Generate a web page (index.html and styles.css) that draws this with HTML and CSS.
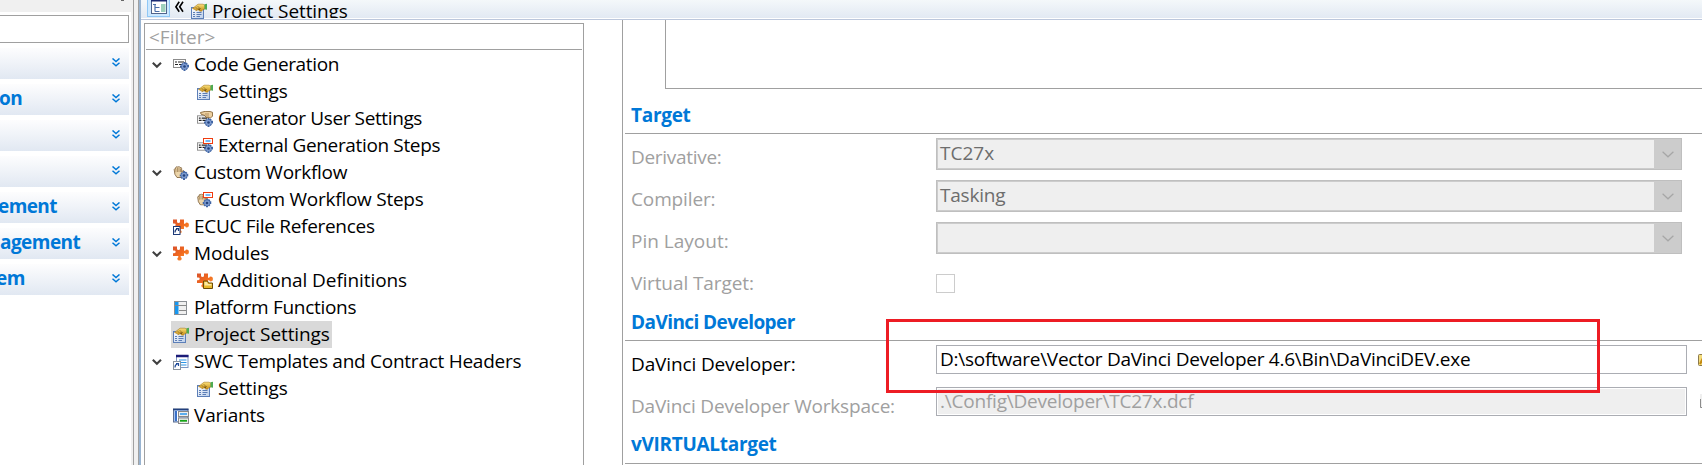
FILE: index.html
```
<!DOCTYPE html>
<html lang="en">
<head>
<meta charset="utf-8">
<title>Project Settings</title>
<link rel="stylesheet" href="styles.css">
</head>
<body>
<svg class="defs" width="0" height="0">
  <defs>
    <linearGradient id="gold" x1="0" y1="0" x2="0" y2="1"><stop offset="0" stop-color="#fbe07a"/><stop offset="1" stop-color="#c48a10"/></linearGradient>
    <linearGradient id="orange" x1="0" y1="0" x2="1" y2="1"><stop offset="0" stop-color="#d9532c"/><stop offset=".5" stop-color="#f26a1e"/><stop offset="1" stop-color="#f9a040"/></linearGradient>
    <linearGradient id="paper" x1="0" y1="0" x2="1" y2="1"><stop offset="0" stop-color="#fff"/><stop offset="1" stop-color="#b9cdea"/></linearGradient>
    <symbol id="gear" viewBox="0 0 9 9">
      <path d="M3.6 0h1.8v1.2l1-.7 1.4 1.3-.7 1H9v2.7H7.200l.7 1-1.300 1.400-1.100-.7V9H3.500V7.300l-1.100.700L1.100 6.700l.7-1.100H0V3.500h1.700l-.7-1.100L2.400 1l1.200.700z" fill="#3f64a4"/>
      <circle cx="4.500" cy="4.500" r="2.700" fill="#7c9bd0"/><circle cx="4.500" cy="4.500" r="1.300" fill="#23427c"/>
    </symbol>
    <symbol id="card" viewBox="0 0 13 9">
      <rect x=".5" y=".5" width="12" height="8" fill="#fff" stroke="#8b8b8b"/>
      <path d="M2 3h2M5 3h6M2 5.500h3M6 5.500h4" stroke="#222" stroke-width="1.200"/>
    </symbol>
    <symbol id="palm" viewBox="0 0 12 12">
      <path d="M1.200 3.600q.2-1.200 1.400-.8L2.800 1.300q.8-.9 1.500-.2Q5 .1 5.900 1q1-.5 1.500.5 1.200-.2 1.200 1l.2 3.500 1-1.300q1.200-.4 1.200.6L9.300 9 8 11.500H4L1.900 8.300z" fill="#ecd5aa" stroke="#7a5a33" stroke-width=".8"/>
      <path d="M2.900 3v3.200M4.500 2v4M6 2v4M7.500 2.500v3.500" stroke="#8b693c" stroke-width=".6"/>
    </symbol>
    <symbol id="note" viewBox="0 0 10 6"><rect x=".5" y=".5" width="9" height="5" fill="#fff" stroke="#f03c10"/><path d="M2.500 3h5" stroke="#1b8cf0" stroke-width="1.200"/></symbol>
    <symbol id="piece" viewBox="0 0 16 15">
      <path d="M0 .5h4v2.300q0 1.200 1.500 1.200T7 2.800V.5h4v4.300h1.200q.3-1.300 1.800-1.300 2 .3 2 2.500t-2 2.500q-1.500 0-1.800-1.300H11V10H7.700v1.200q1.100.5 1 1.700-.3 1.600-2.200 1.600t-2.200-1.600q0-1.200 1-1.700V10H0V7.200h1.200q1.500 0 1.500-1.400T1.200 4.400H0z" fill="url(#orange)"/>
    </symbol>
    <symbol id="i-props" viewBox="0 0 16 16">
      <rect x=".5" y="4.500" width="12" height="11" fill="url(#paper)" stroke="#5c7fb8"/>
      <path d="M2 9.500h2M5.500 9.500h5M2 11.500h2M5.500 11.500h5M2 13.500h2M5.500 13.500h3.500" stroke="#5b7db5"/>
      <path d="M1.500 5.500L7 1.200h5l2 1V6l-2 .5-1.500 1.800-2-.4-1.300-1.200-2.200 1-1-1.200z" fill="url(#gold)" stroke="#a87a1c" stroke-width=".6"/>
      <path d="M5 4.500l1 1M7 3.500l1 1M7 6l2 .5M8.500 5l1 1" stroke="#5e430d" stroke-width=".9"/>
      <path d="M13.500 1.200L16 .8v6l-2.500-.6z" fill="#4dab54"/>
    </symbol>
    <symbol id="i-code" viewBox="0 0 16 16"><use href="#card" y="2" width="13" height="9"/><use href="#gear" x="7" y="5" width="9" height="9"/></symbol>
    <symbol id="i-gen" viewBox="0 0 16 16">
      <use href="#card" y="4" width="12" height="9"/><use href="#gear" x="7" y="7" width="9" height="9"/>
      <path d="M3.500 1.500Q8-.2 13 .5l2.500.8v4l-2 1.500L9 6.500 8 4.500 4 3.200z" fill="#edd0a0" stroke="#7c5a2c" stroke-width=".8"/>
      <path d="M8 3h4M9 5h3" stroke="#9a7440" stroke-width=".7"/>
    </symbol>
    <symbol id="i-ext" viewBox="0 0 16 16"><use href="#card" y="4" width="12" height="9"/><use href="#gear" x="7" y="6" width="9" height="9"/><use href="#note" x="6" y="0" width="10" height="6"/></symbol>
    <symbol id="i-flow" viewBox="0 0 16 16"><use href="#palm" x="0" y="1" width="12" height="12"/><use href="#gear" x="6.500" y="6" width="9" height="9"/></symbol>
    <symbol id="i-steps" viewBox="0 0 16 16"><use href="#palm" x="-.5" y="1.500" width="12" height="12"/><use href="#gear" x="5.500" y="6.500" width="9" height="9"/><use href="#note" x="6" y="0" width="10" height="6"/></symbol>
    <symbol id="i-ecuc" viewBox="0 0 16 16"><use href="#piece" width="16" height="15"/><rect x=".5" y="7.500" width="6.500" height="8" fill="#fff" stroke="#1d3a78"/><path d="M2 13.500q0-3 2.300-3.300M3 9.500h2.500V12" fill="none" stroke="#1d3a78" stroke-width="1.200"/></symbol>
    <symbol id="i-mod" viewBox="0 0 16 16"><use href="#piece" width="16" height="15"/></symbol>
    <symbol id="i-add" viewBox="0 0 16 16"><use href="#piece" width="16" height="15"/><path d="M6.500 8h4l1 2h4v5.500h-9z" fill="#e8b92c" stroke="#6c4d08"/><path d="M7.500 9h2.500l1 2h3.500v1.500h-7z" fill="#fbeaa4"/></symbol>
    <symbol id="i-plat" viewBox="0 0 16 16"><rect x="1.500" y="1.500" width="12" height="13" fill="#f0f0f0" stroke="#8b8f94"/><rect x="2" y="2" width="3.500" height="12" fill="#1797f0"/><path d="M2 5.500h11.500M6 10.500h7" stroke="#888"/></symbol>
    <symbol id="i-swc" viewBox="0 0 16 16"><rect x="3.500" y="1.500" width="11.500" height="12" fill="#fff" stroke="#7c97c2"/><path d="M3 2h12.500" stroke="#1b1b78" stroke-width="2.500"/><path d="M6 6h7.500M6 8.500h7.500M8 11h5.500" stroke="#2b94e6" stroke-width="1.200"/><rect x=".5" y="7.500" width="7" height="8" fill="#fff" stroke="#8a949f"/><path d="M2 13.500q0-3 2.300-3.300M3 9.700h2.500V12" fill="none" stroke="#204c9c" stroke-width="1.200"/></symbol>
    <symbol id="i-var" viewBox="0 0 16 16"><rect x=".5" y="1" width="14.500" height="13" fill="#a8c4ee" stroke="#5d6f92"/><path d="M0 1.500h15.500" stroke="#23407e" stroke-width="1.500"/><path d="M3 3v10" stroke="#3a70c8" stroke-width="2"/><path d="M4.500 3v10" stroke="#fff"/><rect x="5.500" y="3.500" width="10" height="5" fill="#eee" stroke="#888"/><path d="M7 6h7" stroke="#4aa5ee" stroke-width="1.800"/><rect x="5.500" y="10" width="10" height="5.500" fill="#eee" stroke="#888"/><path d="M7 12.800h7" stroke="#16a516" stroke-width="1.800"/></symbol>
    <symbol id="i-open" viewBox="0 0 10 8"><path d="M.8 1.700L4.900 5.700 9 1.700" fill="none" stroke="#404040" stroke-width="2.100"/></symbol>
    <symbol id="i-expand" viewBox="0 0 8 9"><path d="M.5 .5L4 3.500 7.500.5M.5 4.700L4 7.700 7.500 4.700" fill="none" stroke="#0078d7" stroke-width="1.500"/></symbol>
    <symbol id="i-drop" viewBox="0 0 12 7"><path d="M.6.700L6 5.800 11.400.7" fill="none" stroke="#a6a6a6" stroke-width="1.200"/></symbol>
  </defs>
</svg>

<div class="app">
  <aside class="side">
    <div class="side-top"><i class="tick"></i></div>
    <div class="side-input"></div>
    <nav class="groups">
      <div class="group"><span></span><svg><use href="#i-expand"/></svg></div>
      <div class="group"><span class="g-on">on</span><svg><use href="#i-expand"/></svg></div>
      <div class="group"><span></span><svg><use href="#i-expand"/></svg></div>
      <div class="group"><span></span><svg><use href="#i-expand"/></svg></div>
      <div class="group"><span class="g-ement">ement</span><svg><use href="#i-expand"/></svg></div>
      <div class="group"><span class="g-age">agement</span><svg><use href="#i-expand"/></svg></div>
      <div class="group"><span class="g-em">em</span><svg><use href="#i-expand"/></svg></div>
    </nav>
  </aside>
  <div class="sash"></div>

  <main class="editor">
    <header class="head">
      <span class="toggle"><svg width="16" height="14" viewBox="0 0 16 14"><rect x=".5" y="-3.500" width="15" height="17" fill="#fff" stroke="#50648c"/><path d="M0 0h16" stroke="#1b2a72" stroke-width="3"/><rect x="10" y="4" width="4.500" height="8" fill="#9ed0bc"/><path d="M2 4.500h3M4 5v6.500M4 7.500h4.500M4 11.500h4.500" stroke="#4a6fa8" stroke-width="1.200" fill="none"/></svg></span>
      <svg class="back" width="9" height="12" viewBox="0 0 9 12"><path d="M4.200.8L.9 5.800l3.300 5M8 .8L4.700 5.800 8 10.800" fill="none" stroke="#000" stroke-width="1.600"/></svg>
      <svg class="icon head-icon"><use href="#i-props"/></svg>
      <span class="head-title">Project Settings</span>
    </header>

    <div class="body">
      <section class="tree">
        <div class="filter">&lt;Filter&gt;</div>
        <div class="row"><svg class="arrow"><use href="#i-open"/></svg><div class="item"><svg class="icon"><use href="#i-code"/></svg><span class="t1">Code Generation</span></div></div>
        <div class="row sub"><div class="item"><svg class="icon"><use href="#i-props"/></svg><span class="t2">Settings</span></div></div>
        <div class="row sub"><div class="item"><svg class="icon"><use href="#i-gen"/></svg><span class="t3">Generator User Settings</span></div></div>
        <div class="row sub"><div class="item"><svg class="icon"><use href="#i-ext"/></svg><span class="t4">External Generation Steps</span></div></div>
        <div class="row"><svg class="arrow"><use href="#i-open"/></svg><div class="item"><svg class="icon"><use href="#i-flow"/></svg><span class="t5">Custom Workflow</span></div></div>
        <div class="row sub"><div class="item"><svg class="icon"><use href="#i-steps"/></svg><span class="t6">Custom Workflow Steps</span></div></div>
        <div class="row leaf"><div class="item"><svg class="icon"><use href="#i-ecuc"/></svg><span class="t7">ECUC File References</span></div></div>
        <div class="row"><svg class="arrow"><use href="#i-open"/></svg><div class="item"><svg class="icon"><use href="#i-mod"/></svg><span class="t8">Modules</span></div></div>
        <div class="row sub"><div class="item"><svg class="icon"><use href="#i-add"/></svg><span class="t9">Additional Definitions</span></div></div>
        <div class="row leaf"><div class="item"><svg class="icon"><use href="#i-plat"/></svg><span class="t10">Platform Functions</span></div></div>
        <div class="row leaf"><div class="item selected"><svg class="icon"><use href="#i-props"/></svg><span class="t11">Project Settings</span></div></div>
        <div class="row"><svg class="arrow"><use href="#i-open"/></svg><div class="item"><svg class="icon"><use href="#i-swc"/></svg><span class="t12">SWC Templates and Contract Headers</span></div></div>
        <div class="row sub"><div class="item"><svg class="icon"><use href="#i-props"/></svg><span class="t2">Settings</span></div></div>
        <div class="row leaf"><div class="item"><svg class="icon"><use href="#i-var"/></svg><span class="t13">Variants</span></div></div>
      </section>

      <section class="form">
        <div class="textarea"></div>
        <h2 class="h-target"><span>Target</span></h2>
        <div class="field off"><label class="l1">Derivative:</label><div class="combo"><span class="v1">TC27x</span><i><svg><use href="#i-drop"/></svg></i></div></div>
        <div class="field off"><label class="l2">Compiler:</label><div class="combo"><span class="v2">Tasking</span><i><svg><use href="#i-drop"/></svg></i></div></div>
        <div class="field off"><label class="l3">Pin Layout:</label><div class="combo"><span></span><i><svg><use href="#i-drop"/></svg></i></div></div>
        <div class="field off"><label class="l4">Virtual Target:</label><div class="check"></div></div>
        <h2 class="h-dev"><span>DaVinci Developer</span></h2>
        <div class="field"><label class="l5">DaVinci Developer:</label><div class="input"><span class="v3">D:\software\Vector DaVinci Developer 4.6\Bin\DaVinciDEV.exe</span></div><svg class="browse" width="16" height="14" viewBox="0 0 16 14"><rect x=".5" y="1.500" width="18" height="11" rx="1" fill="#f3dc7c" stroke="#8c7a4c"/><path d="M2 11l3-6" stroke="#c48a10" stroke-width="2"/></svg></div>
        <div class="field off"><label class="l6">DaVinci Developer Workspace:</label><div class="input"><span class="v4">.\Config\Developer\TC27x.dcf</span></div><svg class="browse gray" width="14" height="15" viewBox="0 0 14 15"><rect width="14" height="14" fill="#efefef"/><path d="M.5 5v8.500H14" fill="none" stroke="#8c8c8c"/></svg></div>
        <h2 class="h-vvt"><span>vVIRTUALtarget</span></h2>
      </section>
    </div>
  </main>
</div>
<div class="highlight"></div>
</body>
</html>
```
FILE: styles.css
```
* { box-sizing: border-box; }
body {
  margin: 0;
  width: 1702px;
  height: 465px;
  overflow: hidden;
  position: relative;
  background: #fff;
  color: #000;
  font: 19px/27px "Open Sans", "Noto Sans", sans-serif;
  white-space: nowrap;
}
.defs { position: absolute; }
.app { display: flex; height: 465px; }

/* left navigation */
.side { width: 131px; flex: none; overflow: hidden; }
.side-top { height: 12px; background: #f0f0f0; display: flex; }
.tick { width: 3px; height: 1px; margin-left: 121px; background: #666; }
.side-input { width: 129px; height: 28px; margin-top: 3px; border: 1px solid #a0a0a0; border-left: 0; }
.groups { display: flex; flex-direction: column; gap: 5px; padding-top: 5px; }
.group {
  width: 129px; height: 31px;
  display: flex; align-items: center; justify-content: space-between;
  padding: 0 9px 2px 0;
  background: linear-gradient(#fdfdfe, #e1e8f2);
  color: #0078d7; font-weight: 700;
}
.group svg { width: 8px; height: 9px; }
.g-on { letter-spacing: -.5px; margin-left: -1px; }
.g-ement { letter-spacing: -.6px; margin-left: -2px; }
.g-age { letter-spacing: -.55px; }
.g-em { letter-spacing: -.6px; margin-left: -4px; }
.sash {
  width: 10px; flex: none;
  background: linear-gradient(90deg, #f0f0f0 2px, #a0a0a0 2px 3px, #f0f0f0 3px 7px, #a0a0a0 7px 8px, #99b4d1 8px);
}

/* editor */
.editor { flex: 1; min-width: 0; display: flex; flex-direction: column; }
.head {
  height: 20px; flex: none; overflow: hidden;
  display: flex; align-items: flex-start;
  background: linear-gradient(#f4f8fa, #e2e9f3 18px, #fff 18px);
  border-bottom: 1px solid #bcc7dc;
}
.toggle { width: 23px; height: 17px; margin-left: 6px; padding: 0 0 0 3px; background: #cce8ff; border: 1px solid #90c8f6; border-top: 0; display: flex; }
.back { margin: 1px 0 0 5px; }
.head-icon { margin: 3px 0 0 7px; }
.head-title { height: 18px; overflow: hidden; margin-left: 5px; line-height: 23px; letter-spacing: -.1px; }
.icon { width: 16px; height: 16px; flex: none; }
.body { flex: 1; min-height: 0; display: flex; }

.tree { width: 440px; flex: none; margin: 3px 0 0 3px; border: 1px solid #a0a0a0; border-bottom: 0; }
.filter { height: 26px; margin: 0 1px 1px; padding-left: 3px; border-bottom: 1px solid #a0a0a0; color: #a0a0a0; }
.row { height: 27px; display: flex; align-items: center; padding-left: 7px; }
.arrow { width: 10px; height: 8px; margin-right: 9px; }
.leaf { padding-left: 26px; }
.sub { padding-left: 50px; }
.item { height: 27px; display: flex; align-items: center; gap: 5px; padding: 0 2px; line-height: 27px; }
.item span { height: 27px; }
.selected { background: #d9d9d9; }
.t1 { letter-spacing: -.36px; }
.t2 { letter-spacing: -.1px; }
.t3 { letter-spacing: -.38px; }
.t4 { letter-spacing: -.35px; }
.t5 { letter-spacing: -.29px; }
.t6 { letter-spacing: -.26px; }
.t7 { letter-spacing: -.3px; }
.t8 { letter-spacing: -.15px; }
.t9 { letter-spacing: -.08px; }
.t10 { letter-spacing: -.3px; }
.t11 { letter-spacing: -.1px; }
.t12 { letter-spacing: -.26px; }
.t13 { letter-spacing: -.2px; }

.form { flex: 1; min-width: 0; margin-left: 38px; padding-left: 2px; border-left: 1px solid #a0a0a0; }
.textarea { height: 69px; margin-left: 40px; border: 1px solid #a0a0a0; border-width: 0 0 1px 1px; }
h2 { margin: 0; padding-left: 6px; border-bottom: 1px solid #a0a0a0; font-size: 19px; line-height: 27px; color: #0078d7; letter-spacing: -.3px; }
.h-target { height: 45px; padding-top: 13px; margin-bottom: 4px; }
.h-dev { height: 35px; padding-top: 3px; margin-bottom: 4px; letter-spacing: -.57px; }
.h-vvt { height: 35px; padding-top: 2px; }
.field { height: 42px; display: flex; align-items: flex-start; padding-left: 6px; }
.field label { width: 305px; flex: none; padding-top: 6px; }
.field .l1 { letter-spacing: -.3px; }
.field .l2, .field .l5 { letter-spacing: -.13px; }
.field .l4 { letter-spacing: -.08px; }
.field .l6 { letter-spacing: -.2px; }
.v2 { letter-spacing: -.2px; }
.v3 { letter-spacing: -.27px; }
.v4 { letter-spacing: -.22px; }
.off { color: #a0a0a0; }
.combo { width: 746px; height: 32px; flex: none; display: flex; border: 1px solid #bfbfbf; background: #efefef; color: #6d6d6d; box-shadow: inset 0 0 0 1px #ccc; }
.combo span { flex: 1; padding-left: 3px; line-height: 29px; }
.combo i { width: 27px; display: flex; align-items: center; justify-content: center; background: #ccc; }
.combo svg { width: 12px; height: 7px; }
.check { width: 19px; height: 19px; margin-top: 10px; border: 1px solid #ccc; }
.input { width: 751px; height: 29px; flex: none; padding: 1px; border: 1px solid #abadb3; }
.input span { display: block; height: 25px; padding-left: 2px; line-height: 25px; }
.off .input span { background: #efefef; }
.browse { margin: 8px 0 0 11px; flex: none; }
.gray { margin: 7px 0 0 13px; }

/* annotation over the form */
.highlight { position: absolute; left: 886px; top: 319px; width: 714px; height: 74px; border: 3px solid #ed1c24; }
```
